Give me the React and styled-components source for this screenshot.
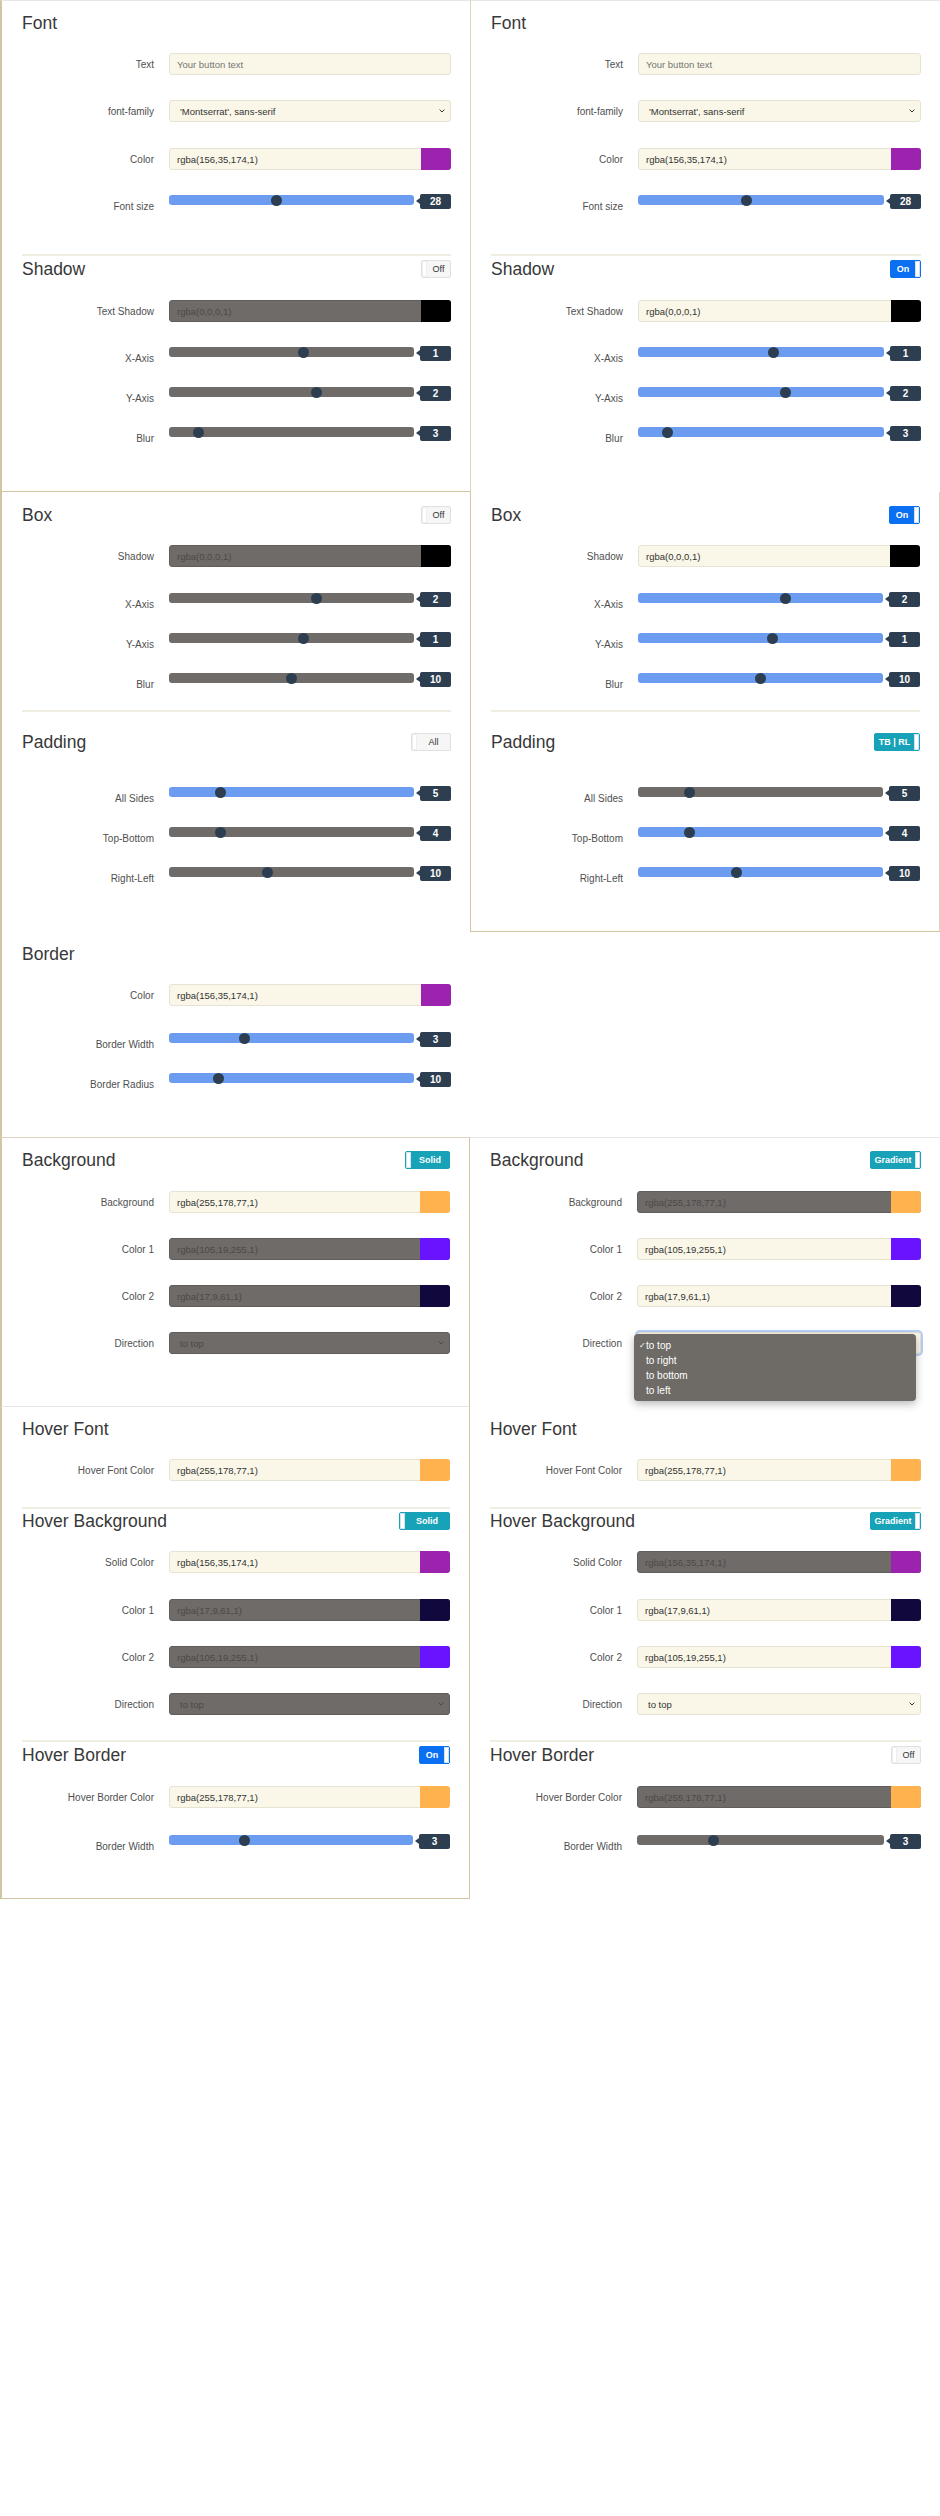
import React from "react";
import styled, { createGlobalStyle, css } from "styled-components";

const color = {
  tan: "#d3c5a2",
  tanLight: "#ddd4bd",
  line: "#e6e6e6",
  cream: "#faf7e8",
  creamBorder: "#e7e3d3",
  grey: "#6f6b69",
  greyBorder: "#615d5b",
  greyText: "#4d4947",
  blue: "#6b9cf0",
  navy: "#2c3e50",
  primary: "#0b6ff2",
  teal: "#17a2b8",
  title: "#383838",
  label: "#4f4f4f",
  divider: "#f0ede2",
};

const GlobalStyle = createGlobalStyle`
  * { box-sizing: border-box; }
  body {
    margin: 0;
    background: #fff;
    font-family: "Liberation Sans", Arial, sans-serif;
  }
`;

const Page = styled.div`
  width: 940px;
  min-height: 2516px;
  display: grid;
  grid-template-columns: 470px 470px;
  grid-template-rows: auto auto auto auto 1fr;
  align-items: start;
`;

const Card = styled.div`
  position: relative;
  align-self: ${(p) => (p.$short ? "start" : "stretch")};
  padding: ${(p) => p.$pt || 10}px 19px ${(p) => p.$pb || 50}px 20px;
  border-left: ${(p) => p.$left || "none"};
  border-right: ${(p) => p.$right || "none"};
  border-top: ${(p) => p.$top || "none"};
  border-bottom: ${(p) => p.$bottom || "none"};
`;

const Header = styled.div`
  display: flex;
  align-items: center;
  justify-content: space-between;
  height: 24px;
  margin-top: ${(p) => p.$mt || 0}px;
`;

const Title = styled.h2`
  margin: 0;
  font-size: 17.5px;
  font-weight: 400;
  line-height: 24px;
  color: ${color.title};
`;

const Divider = styled.div`
  height: 2px;
  background: ${color.divider};
  margin-top: ${(p) => p.$mt || 0}px;
`;

const Row = styled.div`
  display: grid;
  grid-template-columns: 132px 1fr;
  column-gap: 15px;
  align-items: ${(p) => (p.$slider ? "start" : "center")};
  height: ${(p) => (p.$slider ? "15px" : "auto")};
  margin-top: ${(p) => p.$mt || 0}px;
`;

const Label = styled.div`
  font-size: 10px;
  line-height: 13px;
  color: ${color.label};
  text-align: right;
  white-space: nowrap;
  padding-top: ${(p) => (p.$slider ? 6 : 0)}px;
`;

const Box = styled.div`
  position: relative;
  height: 22px;
  display: flex;
  align-items: center;
  border-radius: 3px;
  font-size: 9.5px;
  ${(p) =>
    p.$off
      ? css`
          background: ${color.grey};
          border: 1px solid ${color.greyBorder};
          color: ${color.greyText};
        `
      : css`
          background: ${color.cream};
          border: 1px solid ${color.creamBorder};
          color: #333;
        `}
  ${(p) =>
    p.$focus &&
    css`
      box-shadow: 0 0 0 2px rgba(126, 170, 240, 0.55);
    `}
`;

const BoxText = styled.span`
  flex: 1;
  padding-left: ${(p) => (p.$select ? 10 : 7)}px;
  color: ${(p) => (p.$placeholder ? "#747474" : "inherit")};
  white-space: nowrap;
`;

const Swatch = styled.span`
  width: 30px;
  align-self: stretch;
  margin: -1px -1px -1px 0;
  border-radius: 0 3px 3px 0;
  background: ${(p) => p.$c};
`;

const Chevron = styled.svg`
  width: 6px;
  height: 4px;
  margin-right: 5px;
`;

const Slider = styled.div`
  display: flex;
  align-items: flex-start;
  gap: 6px;
  height: 15px;
`;

const Track = styled.div`
  position: relative;
  flex: 1;
  height: 10px;
  margin-top: 1px;
  border-radius: 3px;
  background: ${(p) => (p.$on ? color.blue : color.grey)};
`;

const Thumb = styled.span`
  position: absolute;
  top: -0.5px;
  width: 11px;
  height: 11px;
  border-radius: 50%;
  background: ${color.navy};
`;

const Badge = styled.div`
  position: relative;
  width: 31px;
  height: 15px;
  border-radius: 2px;
  background: ${color.navy};
  color: #fff;
  font-size: 10px;
  font-weight: 700;
  display: flex;
  align-items: center;
  justify-content: center;

  &::before {
    content: "";
    position: absolute;
    left: -4px;
    top: 4px;
    border-style: solid;
    border-width: 3.5px 4px 3.5px 0;
    border-color: transparent ${color.navy} transparent transparent;
  }
`;

const toggleLook = {
  off: { bg: "#f6f6f6", border: "#e0e0e0", text: "#333" },
  on: { bg: color.primary, border: color.primary, text: "#fff" },
  teal: { bg: color.teal, border: color.teal, text: "#fff" },
};

const ToggleWrap = styled.div`
  display: flex;
  flex-direction: ${(p) => (p.$handle === "right" ? "row-reverse" : "row")};
  width: ${(p) => p.$w}px;
  height: 18px;
  border-radius: 2px;
  overflow: hidden;
  border: 1px solid ${(p) => toggleLook[p.$look].border};
  background: ${(p) => toggleLook[p.$look].bg};
`;

const Handle = styled.span`
  width: 5px;
  background: #fff;
  border: 1px solid ${(p) => (p.$look === "off" ? "#eee" : "#cfe3f5")};
`;

const ToggleText = styled.span`
  flex: 1;
  display: flex;
  align-items: center;
  justify-content: center;
  font-size: 9px;
  font-weight: ${(p) => (p.$look === "off" ? 400 : 700)};
  color: ${(p) => toggleLook[p.$look].text};
`;

const Menu = styled.div`
  position: absolute;
  left: -4px;
  top: 1px;
  width: 282px;
  padding: 3.5px 0;
  border-radius: 4px;
  background: #6e6b66;
  box-shadow: 0 3px 8px rgba(0, 0, 0, 0.28);
  z-index: 2;
`;

const MenuItem = styled.div`
  position: relative;
  padding-left: 12px;
  font-size: 10px;
  line-height: 15px;
  color: #fff;
`;

const Check = styled.span`
  position: absolute;
  left: 5px;
  font-size: 8px;
`;

function Toggle({ look, handle, w, children }) {
  return (
    <ToggleWrap $look={look} $handle={handle} $w={w}>
      <Handle $look={look} />
      <ToggleText $look={look}>{children}</ToggleText>
    </ToggleWrap>
  );
}

function Section({ title, mt, toggle }) {
  return (
    <Header $mt={mt}>
      <Title>{title}</Title>
      {toggle}
    </Header>
  );
}

function TextField({ label, mt }) {
  return (
    <Row $mt={mt}>
      <Label>{label}</Label>
      <Box>
        <BoxText $placeholder>Your button text</BoxText>
      </Box>
    </Row>
  );
}

function ColorField({ label, value, swatch, off, mt }) {
  return (
    <Row $mt={mt}>
      <Label>{label}</Label>
      <Box $off={off}>
        <BoxText>{value}</BoxText>
        <Swatch $c={swatch} />
      </Box>
    </Row>
  );
}

function SelectField({ label, value, off, mt, open }) {
  return (
    <Row $mt={mt}>
      <Label>{label}</Label>
      <Box $off={off} $focus={open}>
        <BoxText $select>{value}</BoxText>
        <Chevron viewBox="0 0 6 4">
          <path d="M0.6 0.6 L3 3 L5.4 0.6" fill="none" stroke={off ? "#4d4947" : "#333"} strokeWidth="1" />
        </Chevron>
        {open && (
          <Menu>
            <MenuItem>
              <Check>✓</Check>to top
            </MenuItem>
            <MenuItem>to right</MenuItem>
            <MenuItem>to bottom</MenuItem>
            <MenuItem>to left</MenuItem>
          </Menu>
        )}
      </Box>
    </Row>
  );
}

function SliderField({ label, value, pos, on, mt }) {
  return (
    <Row $mt={mt} $slider>
      <Label $slider>{label}</Label>
      <Slider>
        <Track $on={on}>
          <Thumb style={{ left: `calc(${pos}% - 5.5px)` }} />
        </Track>
        <Badge>{value}</Badge>
      </Slider>
    </Row>
  );
}

const PURPLE = "rgb(156,35,174)";
const ORANGE = "rgb(255,178,77)";
const VIOLET = "rgb(105,19,255)";
const NIGHT = "rgb(17,9,61)";

function FontShadow({ shadowOn }) {
  return (
    <>
      <Section title="Font" />
      <TextField label="Text" mt={18} />
      <SelectField label="font-family" value="'Montserrat', sans-serif" mt={25} />
      <ColorField label="Color" value="rgba(156,35,174,1)" swatch={PURPLE} mt={26} />
      <SliderField label="Font size" value="28" pos={44} on mt={24} />
      <Divider $mt={45} />
      <Section
        title="Shadow"
        mt={1}
        toggle={
          shadowOn ? (
            <Toggle look="on" handle="right" w={31}>On</Toggle>
          ) : (
            <Toggle look="off" handle="left" w={30}>Off</Toggle>
          )
        }
      />
      <ColorField label="Text Shadow" value="rgba(0,0,0,1)" swatch="#000" off={!shadowOn} mt={19} />
      <SliderField label="X-Axis" value="1" pos={55} on={shadowOn} mt={24} />
      <SliderField label="Y-Axis" value="2" pos={60} on={shadowOn} mt={25} />
      <SliderField label="Blur" value="3" pos={12} on={shadowOn} mt={25} />
    </>
  );
}

function BoxPadding({ boxOn, split }) {
  return (
    <>
      <Section
        title="Box"
        toggle={
          boxOn ? (
            <Toggle look="on" handle="right" w={31}>On</Toggle>
          ) : (
            <Toggle look="off" handle="left" w={30}>Off</Toggle>
          )
        }
      />
      <ColorField label="Shadow" value="rgba(0,0,0,1)" swatch="#000" off={!boxOn} mt={18} />
      <SliderField label="X-Axis" value="2" pos={60} on={boxOn} mt={25} />
      <SliderField label="Y-Axis" value="1" pos={55} on={boxOn} mt={25} />
      <SliderField label="Blur" value="10" pos={50} on={boxOn} mt={25} />
      <Divider $mt={23} />
      <Section
        title="Padding"
        mt={18}
        toggle={
          split ? (
            <Toggle look="teal" handle="right" w={46}>TB | RL</Toggle>
          ) : (
            <Toggle look="off" handle="left" w={40}>All</Toggle>
          )
        }
      />
      <SliderField label="All Sides" value="5" pos={21} on={!split} mt={32} />
      <SliderField label="Top-Bottom" value="4" pos={21} on={split} mt={25} />
      <SliderField label="Right-Left" value="10" pos={40} on={split} mt={25} />
    </>
  );
}

function Background({ gradient }) {
  return (
    <>
      <Section
        title="Background"
        toggle={
          gradient ? (
            <Toggle look="teal" handle="right" w={51}>Gradient</Toggle>
          ) : (
            <Toggle look="teal" handle="left" w={45}>Solid</Toggle>
          )
        }
      />
      <ColorField label="Background" value="rgba(255,178,77,1)" swatch={ORANGE} off={gradient} mt={19} />
      <ColorField label="Color 1" value="rgba(105,19,255,1)" swatch={VIOLET} off={!gradient} mt={25} />
      <ColorField label="Color 2" value="rgba(17,9,61,1)" swatch={NIGHT} off={!gradient} mt={25} />
      <SelectField label="Direction" value="to top" off={!gradient} open={gradient} mt={25} />
    </>
  );
}

function Hover({ gradient, borderOn }) {
  return (
    <>
      <Section title="Hover Font" />
      <ColorField label="Hover Font Color" value="rgba(255,178,77,1)" swatch={ORANGE} mt={18} />
      <Divider $mt={26} />
      <Section
        title="Hover Background"
        toggle={
          gradient ? (
            <Toggle look="teal" handle="right" w={51}>Gradient</Toggle>
          ) : (
            <Toggle look="teal" handle="left" w={51}>Solid</Toggle>
          )
        }
      />
      <ColorField label="Solid Color" value="rgba(156,35,174,1)" swatch={PURPLE} off={gradient} mt={18} />
      <ColorField label="Color 1" value="rgba(17,9,61,1)" swatch={NIGHT} off={!gradient} mt={26} />
      <ColorField label="Color 2" value="rgba(105,19,255,1)" swatch={VIOLET} off={!gradient} mt={25} />
      <SelectField label="Direction" value="to top" off={!gradient} mt={25} />
      <Divider $mt={25} />
      <Section
        title="Hover Border"
        mt={1}
        toggle={
          borderOn ? (
            <Toggle look="on" handle="right" w={31}>On</Toggle>
          ) : (
            <Toggle look="off" handle="left" w={30}>Off</Toggle>
          )
        }
      />
      <ColorField label="Hover Border Color" value="rgba(255,178,77,1)" swatch={ORANGE} off={!borderOn} mt={19} />
      <SliderField label="Border Width" value="3" pos={31} on={borderOn} mt={26} />
    </>
  );
}

export default function App() {
  const tanEdge = `2px solid ${color.tan}`;
  const tanLine = `1px solid ${color.tan}`;
  return (
    <Page>
      <GlobalStyle />

      <Card $left={tanEdge} $top={`1px solid ${color.line}`} $bottom={tanLine}>
        <FontShadow shadowOn={false} />
      </Card>
      <Card $left={`1px solid ${color.tanLight}`} $top={`1px solid ${color.line}`} $pb={51}>
        <FontShadow shadowOn />
      </Card>

      <Card $left={tanEdge} $pt={11}>
        <BoxPadding boxOn={false} split={false} />
        <Section title="Border" mt={61} />
        <ColorField label="Color" value="rgba(156,35,174,1)" swatch={PURPLE} mt={18} />
        <SliderField label="Border Width" value="3" pos={31} on mt={26} />
        <SliderField label="Border Radius" value="10" pos={20} on mt={25} />
      </Card>
      <Card $short $pt={11} $left={tanLine} $right={`1px solid ${color.tanLight}`} $bottom={tanLine}>
        <BoxPadding boxOn split />
      </Card>

      <Card $left={tanEdge} $right={tanLine} $top={`1px solid ${color.tanLight}`} $pb={52}>
        <Background gradient={false} />
      </Card>
      <Card $top={`1px solid ${color.line}`} $pb={52}>
        <Background gradient />
      </Card>

      <Card $left={tanEdge} $right={tanLine} $top={`1px solid ${color.line}`} $bottom={tanLine} $pb={49}>
        <Hover gradient={false} borderOn />
      </Card>
      <Card $pt={11} $pb={50}>
        <Hover gradient borderOn={false} />
      </Card>
    </Page>
  );
}
